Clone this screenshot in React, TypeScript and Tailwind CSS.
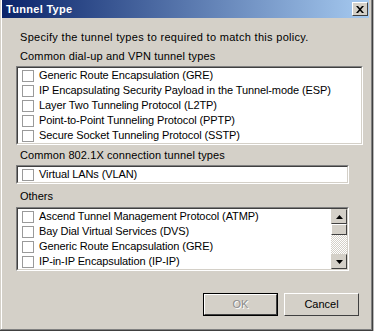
const font = { fontFamily: '"Liberation Sans", Arial, sans-serif' };

const dialUp = [
  "Generic Route Encapsulation (GRE)",
  "IP Encapsulating Security Payload in the Tunnel-mode (ESP)",
  "Layer Two Tunneling Protocol (L2TP)",
  "Point-to-Point Tunneling Protocol (PPTP)",
  "Secure Socket Tunneling Protocol (SSTP)",
];

const others = [
  "Ascend Tunnel Management Protocol (ATMP)",
  "Bay Dial Virtual Services (DVS)",
  "Generic Route Encapsulation (GRE)",
  "IP-in-IP Encapsulation (IP-IP)",
];

function Row({ label }: { label: string }) {
  return (
    <div className="h-[15px] flex items-center pl-[4px]">
      <span className="w-[12px] h-[12px] bg-white border border-[#9a9a9a] shrink-0" />
      <span className="ml-[5px] whitespace-nowrap tracking-[-0.1px]">{label}</span>
    </div>
  );
}

function ListBox({ items, width, scroll }: { items: string[]; width: string; scroll?: boolean }) {
  return (
    <div className={`${width} border border-t-[#808080] border-l-[#808080] border-r-white border-b-white`}>
      <div className="border border-t-[#404040] border-l-[#404040] border-r-[#d4d0c8] border-b-[#d4d0c8] bg-white flex">
        <div className="flex-1 flex flex-col overflow-hidden">
          {items.map((it) => (
            <Row key={it} label={it} />
          ))}
        </div>
        {scroll && <ScrollBar />}
      </div>
    </div>
  );
}

function Arrow({ up }: { up?: boolean }) {
  return (
    <div className="w-[16px] h-[15px] bg-[#d4d0c8] border border-t-[#d4d0c8] border-l-[#d4d0c8] border-r-[#404040] border-b-[#404040] flex items-center justify-center">
      <svg width="7" height="4" viewBox="0 0 7 4">
        {up ? <path d="M3.5 0 L7 4 L0 4 Z" fill="#000" /> : <path d="M0 0 L7 0 L3.5 4 Z" fill="#000" />}
      </svg>
    </div>
  );
}

function ScrollBar() {
  return (
    <div className="w-[16px] flex flex-col bg-[repeating-conic-gradient(#d4d0c8_0_25%,#ffffff_0_50%)] bg-[length:2px_2px]">
      <Arrow up />
      <div className="h-[11px] bg-[#d4d0c8] border border-t-white border-l-white border-r-[#404040] border-b-[#404040]" />
      <div className="flex-1" />
      <Arrow />
    </div>
  );
}

function Button({ label, def }: { label: string; def?: boolean }) {
  return (
    <div className={`w-[75px] h-[23px] ${def ? "border border-black" : ""}`}>
      <div className="w-full h-full border border-t-white border-l-white border-r-[#404040] border-b-[#404040] bg-[#d4d0c8] flex items-center justify-center">
        <span className={def ? "text-[#8c8c8c] [text-shadow:1px_1px_0_#ffffff]" : "text-black"}>{label}</span>
      </div>
    </div>
  );
}

export default function App() {
  return (
    <div className="w-[374px] h-[331px] bg-[#b8b8b8] flex text-[11px] text-black" style={font}>
      <div className="w-[373px] h-[331px] border-r border-b border-r-[#404040] border-b-[#404040]">
        <div className="w-full h-full border-r border-b border-r-[#808080] border-b-[#808080] border-l border-l-[#d4d0c8] bg-[#d4d0c8] flex">
          <div className="flex-1 border-l border-l-white flex flex-col">
            <div className="h-[18px] mr-[2px] bg-[linear-gradient(to_right,#0a246a,#a6caf0)] flex items-center pl-[4px] pr-[1px]">
              <span className="text-white font-bold text-[11px] tracking-[0.3px] flex-1">Tunnel Type</span>
              <div className="w-[16px] h-[14px] bg-[#d4d0c8] border border-t-white border-l-white border-r-[#404040] border-b-[#404040] flex items-center justify-center">
                <svg width="8" height="7" viewBox="0 0 8 7">
                  <path d="M0 0 L2 0 L4 2.3 L6 0 L8 0 L5 3.5 L8 7 L6 7 L4 4.7 L2 7 L0 7 L3 3.5 Z" fill="#000" />
                </svg>
              </div>
            </div>
            <div className="pl-[14px] pt-[13px] flex flex-col">
              <div className="pl-[4px] leading-[13px] tracking-[0.3px]">Specify the tunnel types to required to match this policy.</div>
              <div className="pl-[4px] leading-[13px] mt-[6px] tracking-[0.15px]">Common dial-up and VPN tunnel types</div>
              <div className="mt-[3px]">
                <ListBox items={dialUp} width="w-[347px]" />
              </div>
              <div className="pl-[4px] leading-[13px] mt-[4px] tracking-[0.1px]">Common 802.1X connection tunnel types</div>
              <div className="mt-[3px]">
                <ListBox items={["Virtual LANs (VLAN)"]} width="w-[333px]" />
              </div>
              <div className="pl-[4px] leading-[13px] mt-[6px]">Others</div>
              <div className="mt-[4px]">
                <ListBox items={others} width="w-[333px]" scroll />
              </div>
              <div className="flex justify-end gap-[6px] mt-[22px] pr-[12px]">
                <Button label="OK" def />
                <Button label="Cancel" />
              </div>
            </div>
          </div>
        </div>
      </div>
    </div>
  );
}
